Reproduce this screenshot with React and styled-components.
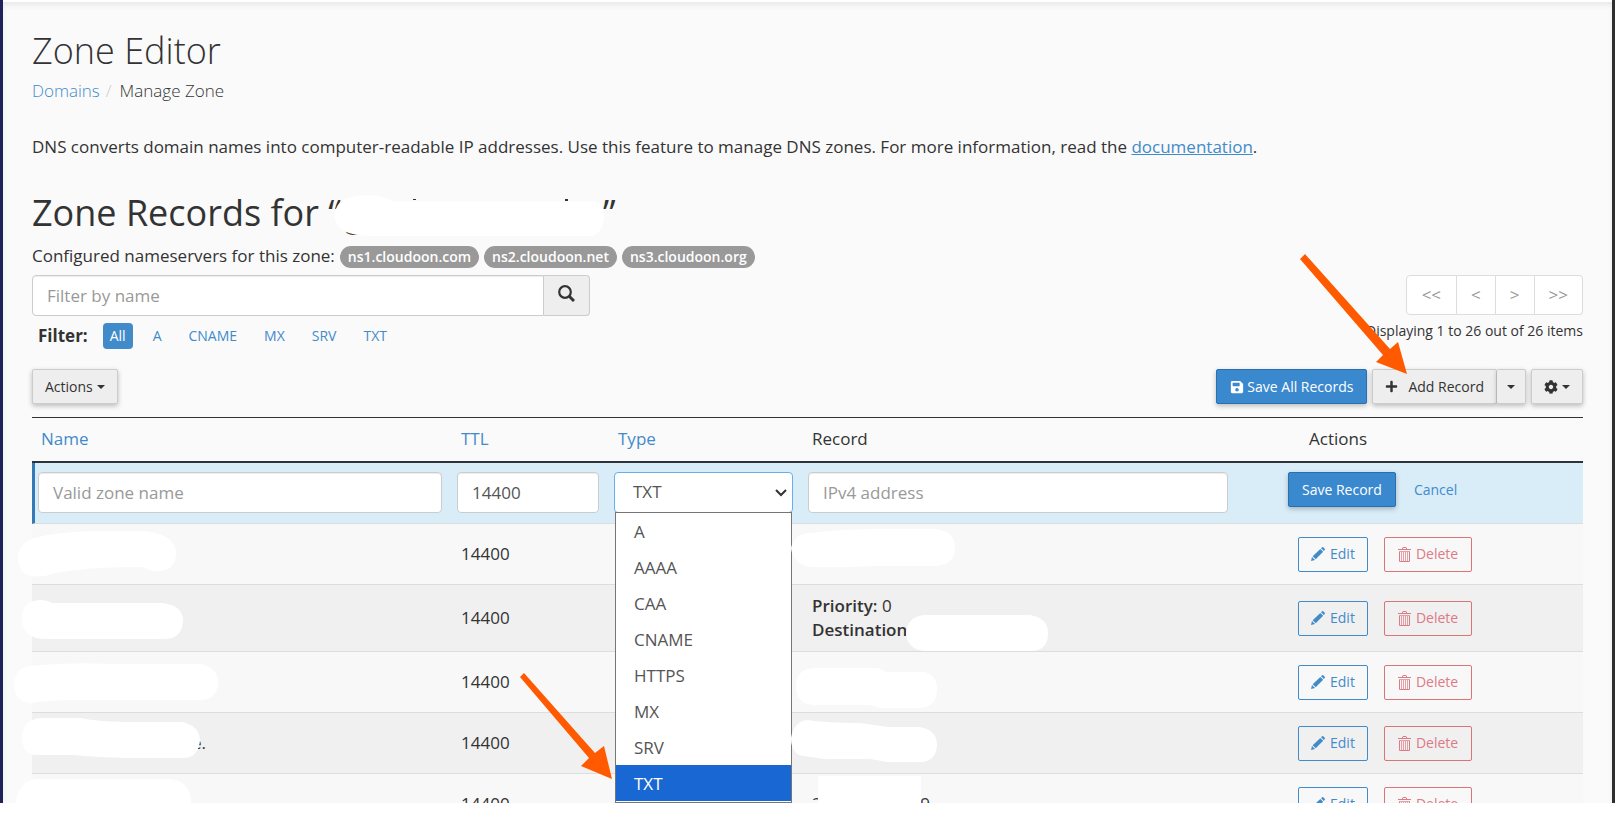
import React from 'react';
import styled, { createGlobalStyle } from 'styled-components';
import { FaSave, FaPlus, FaCog } from 'react-icons/fa';

const NAMESERVERS = ['ns1.cloudoon.com', 'ns2.cloudoon.net', 'ns3.cloudoon.org'];
const FILTERS = ['All', 'A', 'CNAME', 'MX', 'SRV', 'TXT'];
const PAGES = ['<<', '<', '>', '>>'];
const TYPES = ['A', 'AAAA', 'CAA', 'CNAME', 'HTTPS', 'MX', 'SRV', 'TXT'];

const ROWS = [
    { id: 1, ttl: 14400 },
    { id: 2, ttl: 14400, priority: 0 },
    { id: 3, ttl: 14400 },
    { id: 4, ttl: 14400, nameEnd: 'e.' },
    { id: 5, ttl: 14400, record: ['2', '9'] }
];

const PencilIcon = () => (
    <svg width='14' height='14' viewBox='0 0 14 14' fill='currentColor' aria-hidden='true'>
        <path d='M0 14l1-4 3 3zM1.7 9.2L9.3 1.9l2.9 2.9-7.5 7.4zM10.1 1.2L11 .3q.6-.5 1.2 0l1.5 1.5q.5.6 0 1.2l-.9.9z' />
    </svg>
);

const TrashIcon = () => (
    <svg width='13' height='15' viewBox='0 0 13 15' fill='none' stroke='currentColor' aria-hidden='true'>
        <path d='M0 2.5h13M4 2.5l1-2h3l1 2M1.5 5v9.5h10V5' />
        <path d='M1 4.5h11M3.5 5v9M5.5 5v9M7.5 5v9M9.5 5v9' strokeOpacity='0.7' />
    </svg>
);

const SearchIcon = () => (
    <svg width='17' height='17' viewBox='0 0 17 17' fill='none' stroke='currentColor' aria-hidden='true'>
        <circle cx='7' cy='7' r='5.8' strokeWidth='2.2' />
        <path d='M11 11l5 5' strokeWidth='3' />
    </svg>
);

export default () => {
    return (
        <React.Fragment>
            <GlobalStyle />
            <Page>
                <Title>{'Zone Editor'}</Title>
                <Breadcrumb>
                    <Link href='#domains'>{'Domains'}</Link>
                    <Slash>{'/'}</Slash>
                    <span>{'Manage Zone'}</span>
                </Breadcrumb>
                <Intro>
                    {'DNS converts domain names into computer-readable IP addresses. Use this feature to manage DNS zones. For more information, read the '}
                    <DocLink href='#documentation'>{'documentation'}</DocLink>{'.'}
                </Intro>
                <Heading>
                    {'Zone Records for “'}<HiddenDomain>{'g'}</HiddenDomain>{'”'}
                </Heading>
                <Nameservers>
                    <span>{'Configured nameservers for this zone:'}</span>
                    {NAMESERVERS.map(name => <Badge key={name}>{name}</Badge>)}
                </Nameservers>
                <SearchRow>
                    <SearchGroup>
                        <SearchInput type='text' placeholder='Filter by name' aria-label='Filter by name' />
                        <SearchButton type='button' aria-label='Search'><SearchIcon /></SearchButton>
                    </SearchGroup>
                    <Pagination>
                        {PAGES.map(page => <PageButton type='button' key={page}>{page}</PageButton>)}
                    </Pagination>
                </SearchRow>
                <FilterRow>
                    <Filters>
                        <FilterLabel>{'Filter:'}</FilterLabel>
                        {FILTERS.map(name => (
                            <FilterButton type='button' key={name} $active={name === 'All'}>{name}</FilterButton>
                        ))}
                    </Filters>
                    <Displaying>{'Displaying 1 to 26 out of 26 items'}</Displaying>
                </FilterRow>
                <Toolbar>
                    <Button type='button'>{'Actions'}<Caret /></Button>
                    <ToolbarRight>
                        <Button type='button' $primary><FaSave size={14} />{'Save All Records'}</Button>
                        <ButtonGroup>
                            <Button type='button' $wide><FaPlus size={13} />{'Add Record'}</Button>
                            <Button type='button' $narrow aria-label='More add options'><Caret /></Button>
                        </ButtonGroup>
                        <Button type='button' aria-label='Settings'><FaCog size={14} /><Caret /></Button>
                    </ToolbarRight>
                </Toolbar>
                <Table>
                    <colgroup>
                        <col />
                        <Col $width={157} />
                        <Col $width={194} />
                        <Col $width={435} />
                        <Col $width={345} />
                    </colgroup>
                    <thead>
                        <tr>
                            <Th><Link href='#name'>{'Name'}</Link></Th>
                            <Th><Link href='#ttl'>{'TTL'}</Link></Th>
                            <Th><Link href='#type'>{'Type'}</Link></Th>
                            <Th>{'Record'}</Th>
                            <Th $indent={71}>{'Actions'}</Th>
                        </tr>
                    </thead>
                    <tbody>
                        <EditRow>
                            <EditCell><TextInput type='text' placeholder='Valid zone name' aria-label='Name' /></EditCell>
                            <EditCell><TextInput type='text' defaultValue='14400' aria-label='TTL' /></EditCell>
                            <EditCell>
                                <SelectWrapper>
                                    <Select defaultValue='TXT' aria-label='Type'>
                                        {TYPES.map(type => <option key={type}>{type}</option>)}
                                    </Select>
                                    <Chevron viewBox='0 0 12 8'><path d='M1 1l5 5 5-5' /></Chevron>
                                    <Menu>
                                        {TYPES.map(type => <Option key={type} $active={type === 'TXT'}>{type}</Option>)}
                                    </Menu>
                                </SelectWrapper>
                            </EditCell>
                            <EditCell><TextInput type='text' placeholder='IPv4 address' aria-label='Record' /></EditCell>
                            <EditCell>
                                <EditActions>
                                    <Button type='button' $primary>{'Save Record'}</Button>
                                    <CancelButton type='button'>{'Cancel'}</CancelButton>
                                </EditActions>
                            </EditCell>
                        </EditRow>
                        {ROWS.map(row => (
                            <Row key={row.id}>
                                <Td>{row.nameEnd ? <NameEnd>{row.nameEnd}</NameEnd> : null}</Td>
                                <Td>{row.ttl}</Td>
                                <Td />
                                <Td>
                                    {row.priority !== undefined
                                        ?
                                        <Details>
                                            <div><strong>{'Priority:'}</strong>{` ${row.priority}`}</div>
                                            <div><strong>{'Destination'}</strong></div>
                                        </Details>
                                        :
                                        null
                                    }
                                    {row.record
                                        ?
                                        <RecordEnds>{row.record.map(part => <span key={part}>{part}</span>)}</RecordEnds>
                                        :
                                        null
                                    }
                                </Td>
                                <Td $indent={60}>
                                    <RowActions>
                                        <OutlineButton type='button'><PencilIcon />{'Edit'}</OutlineButton>
                                        <OutlineButton type='button' $danger><TrashIcon />{'Delete'}</OutlineButton>
                                    </RowActions>
                                </Td>
                            </Row>
                        ))}
                    </tbody>
                </Table>
                <Marks viewBox='0 0 1615 803' aria-hidden='true'>
                    <g fill='#fff'>
                        <path d='M352 197C365 194 385 195 392 201H594Q604 203 604 216Q603 236 588 236H372C352 236 333 232 335 212Q338 199 352 197Z' />
                        <path d='M18 558Q18 541 38 537Q60 532 98 531H145Q176 535 176 553Q176 571 158 571Q150 571 142 567Q95 566 55 573Q36 580 24 573Q18 568 18 558Z' />
                        <path d='M22 618Q22 601 40 600Q47 600 52 603H162Q183 605 183 621Q182 639 164 639H46Q22 639 22 618Z' />
                        <path d='M14 685Q14 668 30 666Q70 662 110 664H200Q218 667 218 682Q218 700 200 700H75Q50 700 30 703Q14 701 14 685Z' />
                        <path d='M22 738Q22 720 40 718H80Q100 722 130 722H182Q200 726 200 741Q198 758 183 758H140Q100 758 75 755H34Q22 752 22 738Z' />
                        <path d='M16 803Q18 780 38 779H170Q191 781 191 803Z' />
                        <path d='M791 548Q795 532 812 533Q840 529 880 529H935Q955 531 955 547Q955 566 933 566H870Q840 568 812 567Q793 565 791 548Z' />
                        <path d='M906 634Q907 617 924 615H1030Q1048 618 1048 633Q1048 650 1032 651H924Q908 649 906 634Z' />
                        <path d='M796 686Q796 669 814 668H878L886 672H925Q937 676 937 689Q937 707 920 708H880L870 705H814Q796 704 796 686Z' />
                        <path d='M791 738Q794 721 808 720Q825 723 860 723L888 727H920Q937 730 937 745Q936 762 920 762H888L870 759H825L803 756Q791 754 791 738Z' />
                        <path d='M818 776H921V803H818Z' />
                    </g>
                    <path fill='#2f3436' d='M413 199h3v1h-3zM565 199h3v2h-3z' />
                    <g fill='#ff5a00'>
                        <path d='M1305 254L1300 259L1383 355L1376 362L1407 374L1398 342L1390 349Z' />
                        <path d='M524 673L520 677L589 758L581 766L612 779L604 746L595 753Z' />
                    </g>
                </Marks>
            </Page>
        </React.Fragment>
    );
};

const GlobalStyle = createGlobalStyle`
    * {
        box-sizing: border-box;
    }

    body {
        margin: 0;
        background: #fff;
        color: #333;
        font-family: 'Open Sans', sans-serif;
        font-size: 17px;
        line-height: 24px;
    }

    button, input, select {
        margin: 0;
        font: inherit;
    }
`;

const Page = styled.main`
    position: relative;
    height: 803px;
    overflow: hidden;
    padding: 28px 29px 0;
    border-left: 3px solid #20235a;
    border-right: 3px solid #2d2f30;
    background: #fafafa;
    box-shadow: inset 0 2px 0 #fff, inset 0 6px 6px -2px #e4e4e4;
`;

const Title = styled.h1`
    margin: 0;
    font-size: 36px;
    font-weight: 300;
    line-height: 46px;
`;

const Breadcrumb = styled.nav`
    display: flex;
    margin-top: 5px;
    font-weight: 300;
`;

const Link = styled.a`
    color: #428bca;
    text-decoration: none;
`;

const DocLink = styled(Link)`
    text-decoration: underline;
`;

const Slash = styled.span`
    padding: 0 8px 0 6px;
    color: #ccc;
`;

const Intro = styled.p`
    margin: 32px 0 0;
`;

const Heading = styled.h2`
    display: flex;
    margin: 29px 0 0;
    font-size: 36px;
    font-weight: 500;
    line-height: 50px;
`;

const HiddenDomain = styled.span`
    width: 262px;
    padding-left: 4px;
`;

const Nameservers = styled.div`
    display: flex;
    align-items: flex-end;
    gap: 5px;
    margin-top: 6px;
`;

const Badge = styled.span`
    height: 22px;
    padding: 0 8px;
    border-radius: 11px;
    background: #999;
    color: #fff;
    font-size: 14px;
    font-weight: 600;
    line-height: 22px;
`;

const SearchRow = styled.div`
    display: flex;
    justify-content: space-between;
    margin-top: 7px;
`;

const SearchGroup = styled.div`
    display: flex;
    width: 36%;
`;

const TextInput = styled.input`
    width: 100%;
    height: 41px;
    padding: 0 14px;
    border: 1px solid #ccc;
    border-radius: 4px;
    background: #fff;
    color: #555;
    box-shadow: inset 0 1px 1px rgba(0, 0, 0, 0.075);

    &::placeholder {
        color: #999;
        opacity: 1;
    }
`;

const SearchInput = styled(TextInput)`
    flex: 1;
    border-radius: 4px 0 0 4px;
`;

const SearchButton = styled.button`
    width: 46px;
    border: 1px solid #ccc;
    border-left: 0;
    border-radius: 0 4px 4px 0;
    background: #eee;
    color: #333;
    padding: 0;
`;

const Pagination = styled.div`
    display: flex;
    height: 40px;
`;

const PageButton = styled.button`
    padding: 0 14px;
    border: 1px solid #ddd;
    border-left-width: 0;
    background: #fff;
    color: #999;

    &:first-child {
        padding: 0 15px;
        border-left-width: 1px;
        border-radius: 4px 0 0 4px;
    }

    &:last-child {
        border-radius: 0 4px 4px 0;
    }
`;

const FilterRow = styled.div`
    display: flex;
    justify-content: space-between;
    margin-top: 7px;
`;

const Filters = styled.div`
    display: flex;
    gap: 13px;
    padding-left: 6px;
`;

const FilterLabel = styled.strong`
    margin-right: 2px;
    font-weight: 700;
    line-height: 26px;
`;

const FilterButton = styled.button`
    height: 26px;
    padding: 0 7px;
    border: 0;
    border-radius: 4px;
    background: ${({ $active }) => ($active ? '#428bca' : 'transparent')};
    color: ${({ $active }) => ($active ? '#fff' : '#428bca')};
    font-size: 14px;
    line-height: 26px;
`;

const Displaying = styled.div`
    font-size: 14px;
    line-height: 16px;
`;

const Toolbar = styled.div`
    display: flex;
    justify-content: space-between;
    margin: 20px 0 13px;
`;

const ToolbarRight = styled.div`
    display: flex;
    gap: 5px;
`;

const ButtonGroup = styled.div`
    display: flex;
`;

const getPadding = ({ $primary, $narrow }) => {
    if ($narrow) return '10px';
    return $primary ? '13px' : '12px';
};

const Button = styled.button`
    display: flex;
    align-items: center;
    gap: ${({ $wide, $primary }) => ($wide ? '10px' : $primary ? '3px' : '4px')};
    height: 35px;
    padding: 0 ${getPadding};
    border: 1px solid ${({ $primary }) => ($primary ? '#2a6fae' : '#ccc')};
    border-left-width: ${({ $narrow }) => ($narrow ? '0' : '1px')};
    border-radius: 2px;
    background: ${({ $primary }) => ($primary ? '#3a89cf' : '#eee')};
    color: ${({ $primary }) => ($primary ? '#fff' : '#333')};
    box-shadow: 0 2px 5px rgba(0, 0, 0, 0.25);
    font-size: 14px;
    white-space: nowrap;
`;

const Caret = styled.span`
    border-top: 4px solid #333;
    border-left: 4px solid transparent;
    border-right: 4px solid transparent;
`;

const Table = styled.table`
    width: 100%;
    table-layout: fixed;
    border-collapse: separate;
    border-spacing: 0;
    border-top: 1px solid #333;
`;

const Col = styled.col`
    width: ${({ $width }) => $width}px;
`;

const Th = styled.th`
    height: 45px;
    padding: 0 0 2px ${({ $indent }) => $indent || 9}px;
    border-bottom: 2px solid #2b3438;
    font-weight: 400;
    text-align: left;
`;

const EditRow = styled.tr`
    background: #d9edf9;
`;

const EditCell = styled.td`
    height: 61px;
    padding: 0 10px 2px 5px;
    border-bottom: 1px solid #ddd;

    &:first-child {
        padding-left: 3px;
        border-left: 3px solid #337ab7;
    }
`;

const SelectWrapper = styled.div`
    position: relative;
`;

const Select = styled.select`
    display: block;
    width: 100%;
    height: 41px;
    padding: 0 18px;
    appearance: none;
    border: 1px solid #66afe9;
    border-radius: 4px;
    background: #fff;
    color: #555;
`;

const Chevron = styled.svg`
    position: absolute;
    top: 17px;
    right: 6px;
    width: 12px;
    height: 8px;
    fill: none;
    stroke: #333;
    stroke-width: 2;
`;

const Menu = styled.ul`
    position: absolute;
    top: 40px;
    left: 1px;
    right: 1px;
    margin: 0;
    padding: 0 0 1px;
    border: 1px solid #767676;
    background: #fff;
    list-style: none;
`;

const Option = styled.li`
    height: 36px;
    padding-left: 18px;
    background: ${({ $active }) => ($active ? '#1967d2' : '#fff')};
    color: ${({ $active }) => ($active ? '#fff' : '#555')};
    line-height: 38px;
`;

const EditActions = styled.div`
    display: flex;
    align-items: center;
    gap: 18px;
    padding: 0 0 5px 45px;
`;

const CancelButton = styled.button`
    padding: 0;
    border: 0;
    background: none;
    color: #428bca;
    font-size: 14px;
`;

const Row = styled.tr`
    background: #f8f8f8;

    &:nth-child(odd) {
        background: #f0f0f0;
    }
`;

const Td = styled.td`
    height: 61px;
    padding: 9px 0 9px ${({ $indent }) => $indent || 9}px;
    border-bottom: 1px solid #ddd;
`;

const NameEnd = styled.div`
    width: 165px;
    text-align: right;
`;

const Details = styled.div`
    strong {
        font-weight: 600;
    }
`;

const RecordEnds = styled.div`
    display: flex;
    justify-content: space-between;
    width: 118px;
`;

const RowActions = styled.div`
    display: flex;
    gap: 16px;
`;

const OutlineButton = styled.button`
    display: flex;
    align-items: center;
    gap: 5px;
    height: 35px;
    padding: 0 ${({ $danger }) => ($danger ? '13px' : '12px')};
    border: 1px solid ${({ $danger }) => ($danger ? '#dc7477' : '#428bca')};
    border-radius: 2px;
    background: transparent;
    color: ${({ $danger }) => ($danger ? '#dd7a86' : '#428bca')};
    font-size: 14px;
`;

// hand drawn strokes over the private records, and the two pointers
const Marks = styled.svg`
    position: absolute;
    top: 0;
    left: -3px;
    width: 1615px;
    height: 803px;
    pointer-events: none;
`;
